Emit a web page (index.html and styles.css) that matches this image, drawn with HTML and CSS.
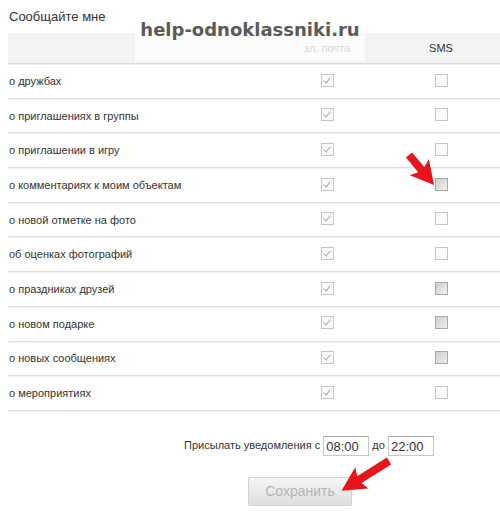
FILE: index.html
```html
<!DOCTYPE html>
<html lang="ru">
<head>
    <meta charset="UTF-8">
    <title>Сообщайте мне</title>
    <link rel="stylesheet" href="styles.css">
</head>
<body>
    <div class="page">
        <div class="caption">Сообщайте мне</div>

        <div class="table">
            <div class="head">
                <div class="cell label"></div>
                <div class="cell col mail">зл. почта</div>
                <div class="cell col">SMS</div>
                <div class="cell"></div>
            </div>

            <div class="row">
                <div class="cell label">о дружбах</div>
                <div class="cell col"><span class="box on"></span></div>
                <div class="cell col"><span class="box"></span></div>
                <div class="cell"></div>
            </div>
            <div class="row">
                <div class="cell label">о приглашениях в группы</div>
                <div class="cell col"><span class="box on"></span></div>
                <div class="cell col"><span class="box"></span></div>
                <div class="cell"></div>
            </div>
            <div class="row">
                <div class="cell label">о приглашении в игру</div>
                <div class="cell col"><span class="box on"></span></div>
                <div class="cell col"><span class="box"></span></div>
                <div class="cell"></div>
            </div>
            <div class="row">
                <div class="cell label">о комментариях к моим объектам</div>
                <div class="cell col"><span class="box on"></span></div>
                <div class="cell col"><span class="box dark"></span></div>
                <div class="cell"></div>
            </div>
            <div class="row">
                <div class="cell label">о новой отметке на фото</div>
                <div class="cell col"><span class="box on"></span></div>
                <div class="cell col"><span class="box"></span></div>
                <div class="cell"></div>
            </div>
            <div class="row">
                <div class="cell label">об оценках фотографий</div>
                <div class="cell col"><span class="box on"></span></div>
                <div class="cell col"><span class="box"></span></div>
                <div class="cell"></div>
            </div>
            <div class="row">
                <div class="cell label">о праздниках друзей</div>
                <div class="cell col"><span class="box on"></span></div>
                <div class="cell col"><span class="box dark"></span></div>
                <div class="cell"></div>
            </div>
            <div class="row">
                <div class="cell label">о новом подарке</div>
                <div class="cell col"><span class="box on"></span></div>
                <div class="cell col"><span class="box dark"></span></div>
                <div class="cell"></div>
            </div>
            <div class="row">
                <div class="cell label">о новых сообщениях</div>
                <div class="cell col"><span class="box on"></span></div>
                <div class="cell col"><span class="box dark"></span></div>
                <div class="cell"></div>
            </div>
            <div class="row">
                <div class="cell label">о мероприятиях</div>
                <div class="cell col"><span class="box on"></span></div>
                <div class="cell col"><span class="box"></span></div>
                <div class="cell"></div>
            </div>
        </div>

        <div class="footer">
            <div class="time">
                Присылать уведомления с
                <span class="field">08:00</span>
                до
                <span class="field">22:00</span>
            </div>
            <button class="save">Сохранить</button>
        </div>

        <!-- водяной знак поверх шапки -->
        <div class="mark">help-odnoklassniki.ru</div>

        <!-- красные стрелки -->
        <svg class="arrows" width="500" height="517" viewBox="0 0 500 517">
            <g transform="translate(409 155) rotate(50)">
                <polygon points="0,-4 19,-4 16,-12.5 39,0 16,12.5 19,4 0,4" fill="#e8141b"/>
            </g>
            <g transform="translate(389 461) rotate(148)">
                <polygon points="0,-4 35,-4 32,-12.5 56,0 32,12.5 35,4 0,4" fill="#e8141b"/>
            </g>
        </svg>
    </div>
</body>
</html>
```

FILE: styles.css
```css
body{
    margin: 0;
    background: #fff;
    font-family: "Liberation Sans", Arial, sans-serif;
    color: #333;
}
.page{
    position: relative;
    width: 500px;
    height: 517px;
    overflow: hidden;
}
.caption{
    font-size: 13px;
    padding: 9px 0 0 9px;
    height: 24px;
    box-sizing: border-box;
}
.table{
    margin: 9px 0 0 8px;
    width: 502px;
}
.head,
.row{
    display: grid;
    grid-template-columns: 1fr 114px 114px 12px;
    align-items: center;
}
.head{
    height: 30px;
    background: #f3f3f3;
    border-bottom: 1px solid #dcdcdc;
    box-shadow: 0 1px 0 #eeeeee;
    font-size: 11px;
}
.row{
    height: 34.7px;
    box-sizing: border-box;
    border-bottom: 1px solid #dedede;
    box-shadow: 0 1px 0 #f2f2f2;
    font-size: 11px;
}
.cell.label{
    padding-left: 1px;
}
.cell.col{
    text-align: center;
}
.head .mail{
    color: #777;
}
.box{
    display: inline-block;
    vertical-align: middle;
    width: 11px;
    height: 11px;
    border: 1px solid #c4c4c4;
    background: #fafafa;
    position: relative;
    top: -1px;
}
.box.on::after{
    content: "";
    position: absolute;
    left: 3px;
    top: 1px;
    width: 3px;
    height: 6px;
    border-right: 1px solid #aaa;
    border-bottom: 1px solid #aaa;
    transform: rotate(40deg);
}
.box.dark{
    border-color: #a8a8a8;
    background: linear-gradient(135deg, #d0d0d0, #eeeeee);
}
.footer{
    margin-left: 100px;
    padding-top: 25px;
    text-align: center;
}
.time{
    font-size: 11px;
    padding-left: 18px;
}
.field{
    display: inline-block;
    width: 46px;
    height: 20px;
    line-height: 19px;
    box-sizing: border-box;
    border: 1px solid #c8c8c8;
    border-top-color: #a9a9a9;
    padding-left: 2px;
    text-align: left;
    vertical-align: middle;
    font-size: 13px;
}
.save{
    margin: 21px 0 0 0;
    width: 104px;
    height: 29px;
    border: 1px solid #d2d2d2;
    border-radius: 2px;
    background: linear-gradient(#f6f6f6, #dedede);
    color: #b4b4b4;
    font-family: "Liberation Sans", Arial, sans-serif;
    font-size: 14px;
}
.mark{
    position: absolute;
    left: 135px;
    top: 14px;
    width: 230px;
    height: 48px;
    padding-top: 5px;
    box-sizing: border-box;
    background: rgba(255,255,255,0.7);
    font-family: "DejaVu Sans", Verdana, sans-serif;
    font-weight: bold;
    font-size: 18px;
    color: #5a5a5a;
    text-align: center;
}
.arrows{
    position: absolute;
    left: 0;
    top: 0;
    pointer-events: none;
}
```
